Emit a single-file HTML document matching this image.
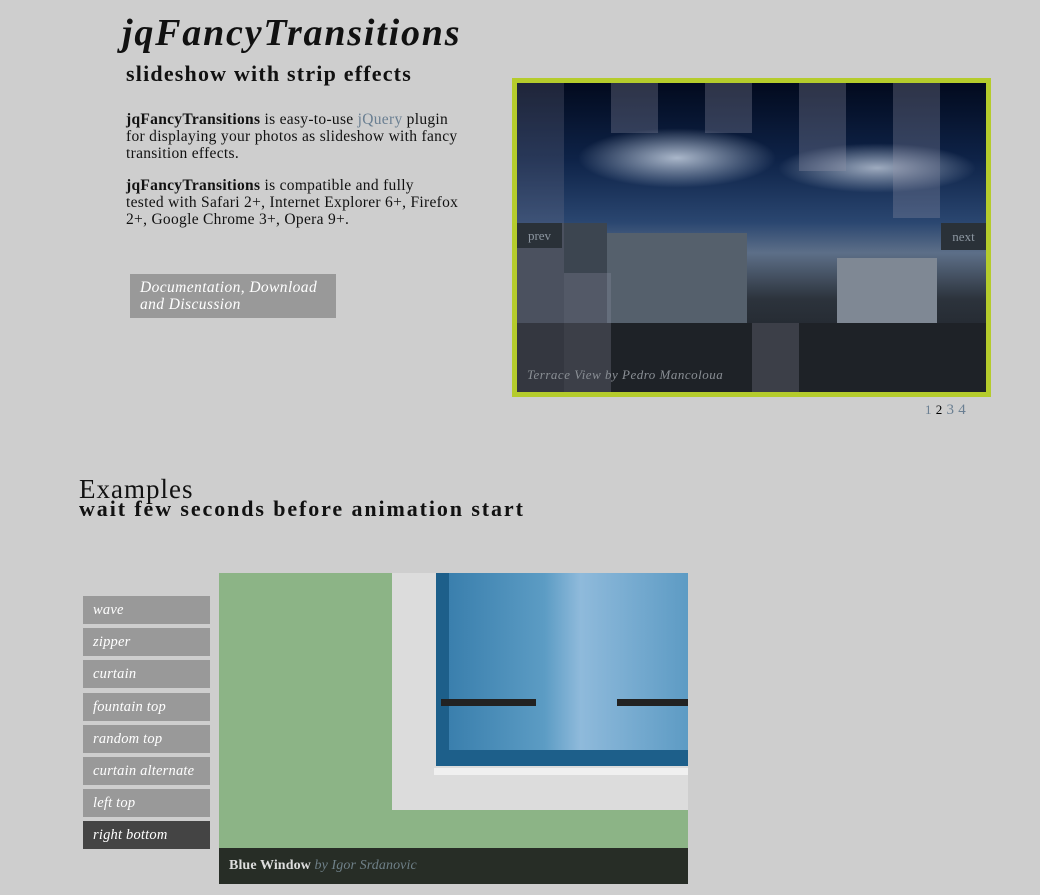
<!DOCTYPE html>
<html><head><meta charset="utf-8"><style>
body{margin:0;background:#cecece;font-family:"Liberation Serif",serif;color:#111;width:1040px;height:895px;overflow:hidden;position:relative}
.a{position:absolute}
h1{position:absolute;left:122px;top:11px;margin:0;font-size:38px;font-style:italic;font-weight:bold;letter-spacing:1.8px}
h2{position:absolute;margin:0;font-weight:bold}
p{position:absolute;margin:0;font-size:15.5px;line-height:17px;width:400px;letter-spacing:0.3px;white-space:nowrap}
.btn{position:absolute;background:#999;color:#fff;font-style:italic;font-size:15.5px;line-height:17px;letter-spacing:0.4px}
.m{position:absolute;left:83px;width:127px;height:28px;background:#999;color:#fff;font-style:italic;font-size:14.5px;line-height:28px;box-sizing:border-box;padding-left:10px;letter-spacing:0.2px}
</style></head><body>
<h1>jqFancyTransitions</h1>
<h2 style="left:126px;top:61px;font-size:22px;letter-spacing:1.2px">slideshow with strip effects</h2>
<p style="left:126px;top:111px"><b>jqFancyTransitions</b> is easy-to-use <span style="color:#6a7f92">jQuery</span> plugin<br>for displaying your photos as slideshow with fancy<br>transition effects.</p>
<p style="left:126px;top:177px"><b>jqFancyTransitions</b> is compatible and fully<br>tested with Safari 2+, Internet Explorer 6+, Firefox<br>2+, Google Chrome 3+, Opera 9+.</p>
<div class="btn" style="left:130px;top:274px;width:206px;height:44px;box-sizing:border-box;padding:5px 10px">Documentation, Download and Discussion</div>

<div class="a" style="left:512px;top:78px;width:469px;height:309px;border:5px solid #b5cc2c;background:linear-gradient(#020a1e 0%,#0e2348 25%,#2a4670 45%,#5d6f88 55%,#2c333c 70%,#15181c 100%);overflow:hidden">
 <div class="a" style="left:60px;top:45px;width:200px;height:60px;background:radial-gradient(ellipse,#aab7ca,transparent 70%)"></div>
 <div class="a" style="left:260px;top:60px;width:200px;height:50px;background:radial-gradient(ellipse,#9eabbf,transparent 70%)"></div>
 <div class="a" style="left:90px;top:150px;width:140px;height:120px;background:#55606c"></div>
 <div class="a" style="left:0;top:140px;width:90px;height:130px;background:#3c4550"></div>
 <div class="a" style="left:320px;top:175px;width:100px;height:115px;background:#7f8894"></div>
 <div class="a" style="left:0;top:240px;width:469px;height:69px;background:#1e2227"></div>
 <div class="a" style="left:0;top:0;width:47px;height:309px;background:rgba(120,120,140,.25)"></div>
 <div class="a" style="left:94px;top:0;width:47px;height:50px;background:rgba(150,150,170,.3)"></div>
 <div class="a" style="left:188px;top:0;width:47px;height:50px;background:rgba(150,150,170,.3)"></div>
 <div class="a" style="left:282px;top:0;width:47px;height:88px;background:rgba(150,150,170,.3)"></div>
 <div class="a" style="left:376px;top:0;width:47px;height:135px;background:rgba(150,150,170,.3)"></div>
 <div class="a" style="left:47px;top:190px;width:47px;height:119px;background:rgba(150,150,170,.25)"></div>
 <div class="a" style="left:235px;top:240px;width:47px;height:69px;background:rgba(150,150,170,.25)"></div>
 <div class="a" style="left:0;top:140px;width:45px;height:25px;background:#2a3138;color:#8c96a0;font-size:13px;line-height:25px;text-align:center">prev</div>
 <div class="a" style="left:424px;top:140px;width:45px;height:27px;background:#2a3138;color:#8c96a0;font-size:13px;line-height:27px;text-align:center">next</div>
 <div class="a" style="left:10px;top:284px;color:#8a8f95;font-style:italic;font-size:13px;letter-spacing:0.5px">Terrace View by Pedro Mancoloua</div>
</div>
<div class="a" style="left:925px;top:402px;font-size:13px;color:#6a7f92;word-spacing:1px">1 <span style="color:#000">2</span> <span style="font-size:15px">3</span> <span style="font-size:15px">4</span></div>

<h2 style="left:79px;top:474px;font-size:27px;font-weight:normal;letter-spacing:1px">Examples</h2>
<h2 style="left:79px;top:496px;font-size:22px;letter-spacing:1.9px">wait few seconds before animation start</h2>

<div class="m" style="top:596px">wave</div>
<div class="m" style="top:628px">zipper</div>
<div class="m" style="top:660px">curtain</div>
<div class="m" style="top:693px">fountain top</div>
<div class="m" style="top:725px">random top</div>
<div class="m" style="top:757px">curtain alternate</div>
<div class="m" style="top:789px">left top</div>
<div class="m" style="top:821px;background:#444">right bottom</div>

<div class="a" style="left:219px;top:573px;width:469px;height:311px;background:#8cb486;overflow:hidden">
 <div class="a" style="left:173px;top:0;width:296px;height:237px;background:#dcdcdc"></div>
 <div class="a" style="left:217px;top:0;width:252px;height:193px;background:#1d5f8a"></div>
 <div class="a" style="left:230px;top:0;width:239px;height:177px;background:linear-gradient(90deg,#3a7fad,#5c9cc4 40%,#8fbadb 55%,#5d9bc4)"></div>
 <div class="a" style="left:215px;top:195px;width:254px;height:7px;background:#f0f0f0"></div>
 <div class="a" style="left:222px;top:126px;width:95px;height:7px;background:#222"></div>
 <div class="a" style="left:398px;top:126px;width:71px;height:7px;background:#222"></div>
 <div class="a" style="left:0;top:275px;width:469px;height:36px;background:rgba(30,34,30,.92);color:#ddd;font-size:14px;line-height:36px;padding-left:10px;box-sizing:border-box;letter-spacing:0.1px"><b>Blue Window</b> <i style="color:#6f8088">by Igor Srdanovic</i></div>
</div>
</body></html>
